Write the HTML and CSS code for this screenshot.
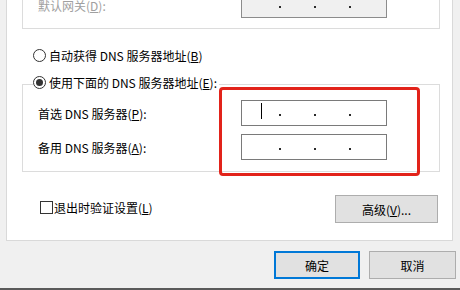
FILE: index.html
```html
<!DOCTYPE html>
<html lang="zh-CN">
<head>
<meta charset="utf-8">
<title>DNS 设置</title>
<link rel="stylesheet" href="styles.css">
</head>
<body>
<div class="window">
  <div class="panel">
    <div class="group gw">
      <div class="field-row">
        <span class="lbl disabled">默认网关(<u>D</u>):</span>
        <div class="ip ip-disabled">
          <span class="seg s1"></span><span class="dot"></span>
          <span class="seg s2"></span><span class="dot"></span>
          <span class="seg s2"></span><span class="dot"></span>
          <span class="seg s4"></span>
        </div>
      </div>
    </div>

    <div class="radio-row auto"><span class="radio"></span><span>自动获得 DNS 服务器地址(<u>B</u>)</span></div>

    <fieldset class="dns">
      <legend><span class="radio-row"><span class="radio checked"></span><span>使用下面的 DNS 服务器地址(<u>E</u>):</span></span></legend>
      <div class="field-row">
        <span class="lbl">首选 DNS 服务器(<u>P</u>):</span>
        <div class="ip">
          <span class="seg s1 caret-seg"><span class="caret"></span></span><span class="dot"></span>
          <span class="seg s2"></span><span class="dot"></span>
          <span class="seg s2"></span><span class="dot"></span>
          <span class="seg s4"></span>
        </div>
      </div>
      <div class="field-row second">
        <span class="lbl">备用 DNS 服务器(<u>A</u>):</span>
        <div class="ip">
          <span class="seg s1"></span><span class="dot"></span>
          <span class="seg s2"></span><span class="dot"></span>
          <span class="seg s2"></span><span class="dot"></span>
          <span class="seg s4"></span>
        </div>
      </div>
    </fieldset>

    <div class="bottom-row">
      <span class="check"><span class="box"></span><span>退出时验证设置(<u>L</u>)</span></span>
      <button class="btn adv">高级(<u>V</u>)...</button>
    </div>
  </div>

  <div class="footer">
    <button class="btn ok">确定</button>
    <button class="btn cancel">取消</button>
  </div>

  <div class="highlight"></div>
</div>
</body>
</html>
```

FILE: styles.css
```css
html, body {
  margin: 0;
  padding: 0;
}

body {
  background: #f0f0f0;
  font-family: "Noto Sans CJK SC", "Noto Sans", sans-serif;
  font-size: 12px;
  color: #000;
}

.window {
  position: relative;
  width: 460px;
  height: 290px;
  box-sizing: border-box;
  overflow: hidden;
  border-bottom: 2px solid #5a5a5a;
}

.panel {
  margin: -20px 0 0 6px;
  width: 447px;
  height: 261px;
  box-sizing: border-box;
  background: #fff;
  border: 1px solid #d9d9d9;
  border-top: 0;
}

.gw {
  margin-left: 15px;
  width: 418px;
  box-sizing: border-box;
  border: 1px solid #dcdcdc;
  border-top: 0;
  padding: 12px 0 10px 15px;
}

.field-row {
  display: flex;
  align-items: center;
  height: 26px;
}

.lbl {
  width: 203px;
  flex: none;
  white-space: nowrap;
}

.disabled {
  color: #a0a0a0;
}

.ip {
  width: 146px;
  height: 26px;
  box-sizing: border-box;
  border: 1px solid #7a7a7a;
  background: #fff;
  display: flex;
}

.ip-disabled {
  background: #f0f0f0;
  border-color: #8c8c8c;
}

.seg {
  display: block;
}

.s1 { width: 37px; }
.s2 { width: 33px; }
.s4 { flex: 1; }

.caret-seg {
  box-sizing: border-box;
  padding: 2px 0 0 19px;
}

.caret {
  display: block;
  width: 1px;
  height: 16px;
  background: #000;
}

.dot {
  align-self: flex-end;
  width: 2px;
  height: 2px;
  margin-bottom: 9px;
  background: #2a2a2a;
}

.radio-row {
  display: flex;
  align-items: center;
  gap: 3px;
  height: 20px;
  white-space: nowrap;
}

.auto {
  margin: 16px 0 0 26px;
}

.radio {
  width: 13px;
  height: 13px;
  box-sizing: border-box;
  border: 1px solid #333;
  border-radius: 50%;
  background: #fff;
  display: flex;
  align-items: center;
  justify-content: center;
  flex: none;
}

.radio.checked::after {
  content: "";
  width: 7px;
  height: 7px;
  border-radius: 50%;
  background: #333;
}

.dns {
  margin: 7px 0 0 15px;
  width: 418px;
  min-width: 0;
  box-sizing: border-box;
  border: 1px solid #dcdcdc;
  padding: 4px 0 11px 10px;
}

.dns legend {
  padding: 0 2px 4px 0;
}

.dns .field-row {
  margin-left: 5px;
}

.dns .second {
  margin-top: 8px;
}

.bottom-row {
  display: flex;
  justify-content: space-between;
  align-items: center;
  height: 28px;
  margin: 23px 14px 0 33px;
}

.check {
  display: flex;
  align-items: center;
  gap: 1px;
  margin-bottom: 4px;
}

.box {
  width: 13px;
  height: 13px;
  box-sizing: border-box;
  border: 1px solid #333;
  background: #fff;
}

.btn {
  font: inherit;
  color: #000;
  background: #e1e1e1;
  border: 1px solid #adadad;
  height: 28px;
  padding: 0;
  box-sizing: border-box;
}

.adv {
  width: 103px;
}

.footer {
  display: flex;
  justify-content: flex-end;
  gap: 9px;
  padding: 10px 4px 0 0;
}

.ok {
  width: 86px;
  border: 2px solid #0078d7;
}

.cancel {
  width: 87px;
}

.highlight {
  position: absolute;
  left: 219px;
  top: 87px;
  width: 201px;
  height: 89px;
  box-sizing: border-box;
  border: 3px solid #e2231a;
  border-radius: 4px;
}
```
